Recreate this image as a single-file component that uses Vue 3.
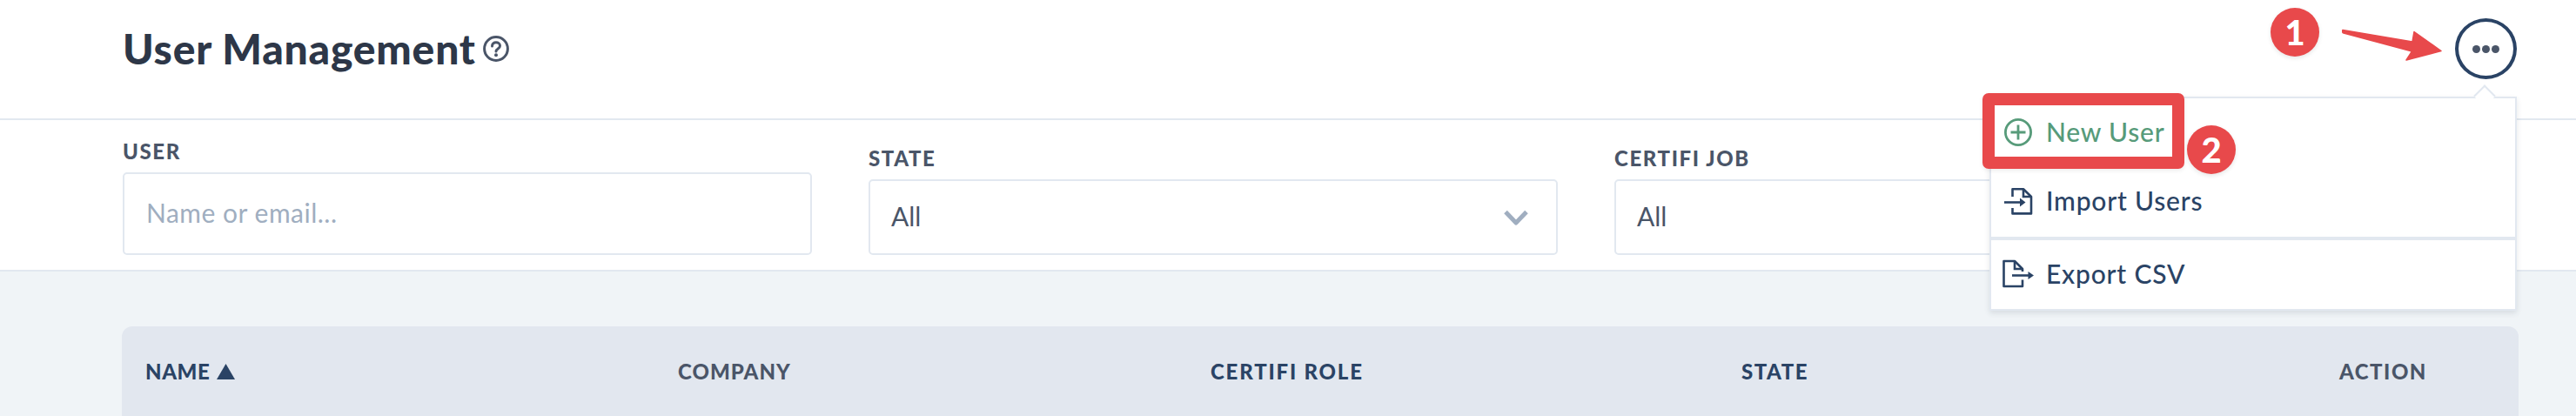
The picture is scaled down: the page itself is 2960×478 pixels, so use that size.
<script setup>
const filters = [
  { label: 'STATE', value: 'All', chevron: true },
  { label: 'CERTIFI JOB', value: 'All', chevron: true }
]
</script>

<template>
  <div class="page">
    <header class="top">
      <div class="title-wrap">
        <h1 class="title">User Management</h1>
        <svg class="help" width="30" height="30" viewBox="0 0 30 30" fill="none" stroke="#4a5568" stroke-width="3">
          <circle cx="15" cy="15" r="13.4" />
          <path d="M10.5 12c0-2.7 2-4.2 4.5-4.2s4.5 1.6 4.5 3.9c0 3.4-4.5 3.2-4.5 6.4" stroke-linecap="round" />
          <circle cx="15" cy="22.3" r="2" fill="#4a5568" stroke="none" />
        </svg>
      </div>
      <button class="more" aria-label="More">
        <span></span><span></span><span></span>
      </button>
    </header>

    <section class="filters">
      <div class="field">
        <label class="label">USER</label>
        <div class="control tall"><span class="placeholder">Name or email...</span></div>
      </div>
      <div v-for="f in filters" :key="f.label" class="field">
        <label class="label">{{ f.label }}</label>
        <div class="control">
          <span class="value">{{ f.value }}</span>
          <svg class="chevron" width="28" height="18" viewBox="0 0 28 18" fill="none">
            <path d="M2 2.5L14 15L26 2.5" stroke="#a0aec0" stroke-width="5" stroke-linejoin="round" />
          </svg>
        </div>
      </div>
    </section>

    <main class="content">
      <div class="table-head">
        <div class="th active name">NAME <svg class="sort" width="21" height="18" viewBox="0 0 21 18"><path d="M10.5 0L21 18H0Z" fill="#2a4365" /></svg></div>
        <div class="th company">COMPANY</div>
        <div class="th active role">CERTIFI ROLE</div>
        <div class="th active">STATE</div>
        <div class="th">ACTION</div>
      </div>
    </main>

    <div class="menu">
      <i class="caret"></i>
      <div class="item green">
        <svg width="36" height="36" viewBox="0 0 36 36" fill="none" stroke="#579b7a" stroke-width="2.8">
          <circle cx="18" cy="18" r="14.6" />
          <path d="M18 9.5V26.5M9.5 18H26.5" />
        </svg>
        <span>New User</span>
      </div>
      <div class="item">
        <svg width="36" height="36" viewBox="0 0 36 36" fill="none" stroke="#2a4365" stroke-width="2.6">
          <path d="M11.5 12V3.2H24L33 12V31.4H11.5V25" stroke-linejoin="round" />
          <path d="M24 3.2V12H33" />
          <path d="M2 18.5H24" />
          <path d="M20 13.5L26.5 18.5L20 23.5Z" fill="#2a4365" stroke="none" />
        </svg>
        <span>Import Users</span>
      </div>
      <div class="divider"></div>
      <div class="item">
        <svg width="36" height="36" viewBox="0 0 36 36" fill="none" stroke="#2a4365" stroke-width="2.6">
          <path d="M23 14V11L14 2H1.5V31H23V23.5" stroke-linejoin="round" />
          <path d="M14 2V11H23" />
          <path d="M11 18.5H31" />
          <path d="M29.5 14L36 18.5L29.5 23Z" fill="#2a4365" stroke="none" />
        </svg>
        <span>Export CSV</span>
      </div>
    </div>

    <div class="highlight"></div>
    <div class="badge one">1</div>
    <div class="badge two">2</div>
    <svg class="arrow" width="116" height="40" viewBox="0 0 116 40">
      <path d="M1 1.5C0 3 0.5 4.5 2 5L80.5 26L74 36L114 25.5L83 3.5L81 15Z" fill="#e8494b" stroke="#e8494b" stroke-width="1.5" stroke-linejoin="round" />
    </svg>
  </div>
</template>

<style>
html, body { margin: 0; background: #fff; }
</style>

<style scoped>
.page {
  position: relative;
  height: 478px;
  overflow: hidden;
  background: #fff;
  font-family: Lato, "Noto Sans", sans-serif;
  color: #2d3748;
}
.top {
  height: 136px;
  box-sizing: border-box;
  padding: 21px 68px 45px 141px;
  display: flex;
  align-items: center;
  justify-content: space-between;
}
.title-wrap { display: flex; align-items: center; gap: 8px; }
.title { margin: 0; font-size: 48px; font-weight: 900; line-height: 1; color: #2d3748; letter-spacing: 0.8px; }
.help { flex: none; }
.more {
  width: 71px;
  height: 70px;
  box-sizing: border-box;
  border: 4px solid #2a4365;
  border-radius: 50%;
  background: #fff;
  padding: 0;
  display: flex;
  align-items: center;
  justify-content: center;
  gap: 2px;
}
.more span { width: 9px; height: 9px; border-radius: 50%; background: #4a5568; }
.filters {
  height: 176px;
  box-sizing: border-box;
  border-top: 2px solid #e2e8f0;
  border-bottom: 2px solid #e2e8f0;
  padding: 0 0 17px 141px;
  display: flex;
  align-items: flex-end;
  gap: 65px;
}
.field { width: 792px; display: flex; flex-direction: column; }
.label { font-size: 24px; font-weight: 900; line-height: 24px; color: #4a5568; letter-spacing: 1.6px; margin-bottom: 12px; }
.control {
  height: 87px;
  box-sizing: border-box;
  border: 2px solid #e2e8f0;
  border-radius: 5px;
  display: flex;
  align-items: center;
  justify-content: space-between;
  padding: 0 32px 0 24px;
  font-size: 30px;
}
.control.tall { height: 95px; padding-left: 25px; }
.placeholder { color: #a0aec0; letter-spacing: 0.5px; margin-bottom: 3px; }
.value { color: #4a5568; margin-bottom: 3px; }
.content {
  background: #f0f4f7;
  height: 166px;
  box-sizing: border-box;
  padding: 63px 66px 0 140px;
}
.table-head {
  height: 104px;
  background: #e2e7ef;
  border-radius: 12px 12px 0 0;
  box-sizing: border-box;
  padding-left: 27px;
  display: grid;
  grid-template-columns: 612px 612px 610px 687px auto;
  align-items: center;
}
.th { font-size: 24px; font-weight: 900; color: #4a5568; letter-spacing: 1.5px; line-height: 24px; display: flex; align-items: center; gap: 8px; }
.th.active { color: #2a4365; }
.th.name { letter-spacing: 0.6px; }
.th.company { letter-spacing: 1px; }
.th.role { letter-spacing: 1.8px; }
.menu {
  position: absolute;
  left: 2286px;
  top: 111px;
  width: 606px;
  height: 246px;
  box-sizing: border-box;
  background: #fff;
  border: 2px solid #e2e8f0;
  box-shadow: 0 3px 6px rgba(45, 55, 72, 0.12);
  display: grid;
  grid-template-rows: 78px 81px 4px 79px;
}
.caret {
  position: absolute;
  left: 558px;
  top: -12px;
  width: 18px;
  height: 18px;
  background: #fff;
  border-top: 2px solid #e2e8f0;
  border-left: 2px solid #e2e8f0;
  transform: rotate(45deg);
  box-sizing: border-box;
}
.item {
  display: flex;
  align-items: center;
  gap: 14px;
  padding-left: 13px;
  font-size: 30px;
  font-weight: 500;
  letter-spacing: 0.8px;
  color: #2a4365;
}
.item span { margin-bottom: 3px; }
.item.green { color: #579b7a; }
.item svg { flex: none; }
.divider { background: #e2e8f0; }
.highlight {
  position: absolute;
  left: 2278px;
  top: 107px;
  width: 232px;
  height: 87px;
  box-sizing: border-box;
  border: 14px solid #e8494b;
  border-radius: 7px;
  box-shadow: 0 2px 5px rgba(0, 0, 0, 0.08);
}
.badge {
  position: absolute;
  width: 56px;
  height: 56px;
  border-radius: 50%;
  background: #e8494b;
  color: #fff;
  font-size: 40px;
  font-weight: 900;
  display: flex;
  align-items: center;
  justify-content: center;
  box-shadow: 0 2px 5px rgba(0, 0, 0, 0.1);
}
.badge.one { left: 2609px; top: 9px; }
.badge.two { left: 2513px; top: 144px; }
.arrow { position: absolute; left: 2691px; top: 33px; }
</style>
